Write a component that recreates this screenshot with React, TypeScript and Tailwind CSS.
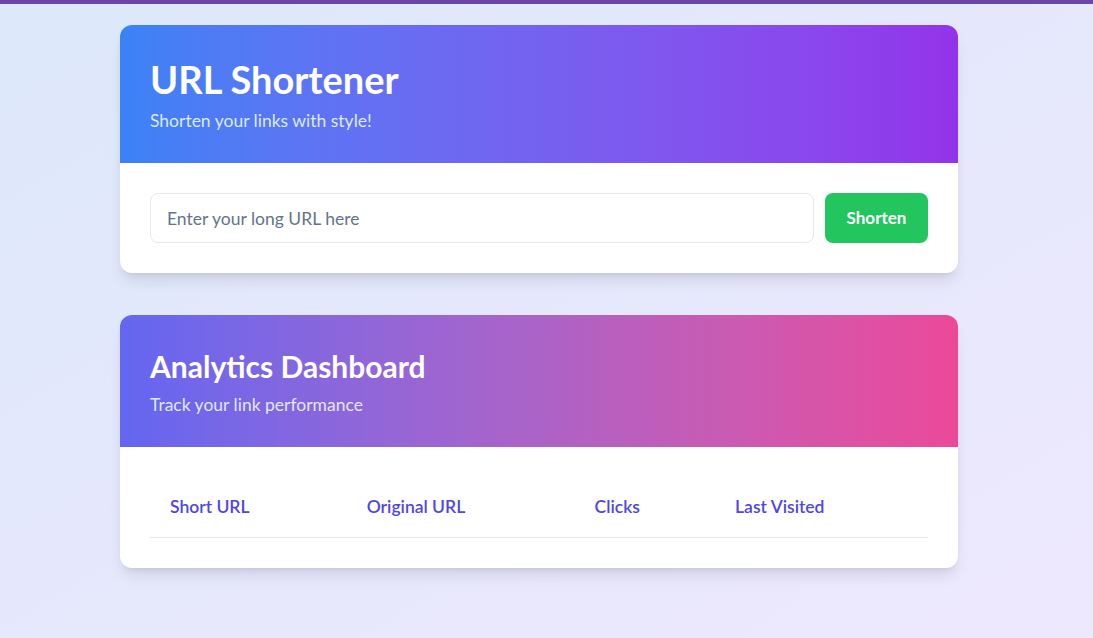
import { useState } from "react";

const font = { fontFamily: "Lato, 'Noto Sans', sans-serif" };

export default function App() {
  const [url, setUrl] = useState("");

  return (
    <div
      style={font}
      className="min-h-[638px] bg-gradient-to-br from-[#dde8fb] to-[#eee8fd] border-t-4 border-[#6b46a6]"
    >
      <div className="flex flex-col items-center pr-[15px] pt-[21px] gap-[43px]">
        <div className="w-[838px] bg-white rounded-xl shadow-lg overflow-hidden">
          <div className="bg-gradient-to-r from-[#3b82f6] to-[#9333ea] h-[138px] px-[30px] pt-[31px]">
            <h1 className="text-[38px] leading-[46px] font-bold text-white">URL Shortener</h1>
            <p className="text-[17.5px] text-[#dbeafe] mt-[6px]">Shorten your links with style!</p>
          </div>
          <div className="flex gap-[11px] p-[30px]">
            <input
              type="text"
              value={url}
              onChange={(e) => setUrl(e.target.value)}
              placeholder="Enter your long URL here"
              className="flex-1 h-[50px] px-4 rounded-lg border border-gray-200 text-[17.5px] placeholder:text-[#64748b] focus:outline-none"
            />
            <button className="w-[103px] h-[50px] bg-[#22c55e] text-white font-bold text-[17px] rounded-lg">
              Shorten
            </button>
          </div>
        </div>

        <div className="w-[838px] bg-white rounded-xl shadow-lg overflow-hidden -mt-px">
          <div className="bg-gradient-to-r from-[#6366f1] to-[#ec4899] h-[132px] px-[30px] pt-[32px]">
            <h2 className="text-[30px] leading-[38px] font-bold text-white">Analytics Dashboard</h2>
            <p className="text-[17.5px] text-[#e0e7ff] mt-[7px]">Track your link performance</p>
          </div>
          <div className="p-[30px]">
            <table className="w-full text-left">
              <thead>
                <tr className="border-b border-gray-200 h-[60px]">
                  <th className="px-5 font-semibold text-[17.5px] text-[#4f46e5]">Short URL</th>
                  <th className="px-5 font-semibold text-[17.5px] text-[#4f46e5]">Original URL</th>
                  <th className="px-5 font-semibold text-[17.5px] text-[#4f46e5]">Clicks</th>
                  <th className="px-5 font-semibold text-[17.5px] text-[#4f46e5]">Last Visited</th>
                </tr>
              </thead>
              <tbody></tbody>
            </table>
          </div>
        </div>
      </div>
    </div>
  );
}
